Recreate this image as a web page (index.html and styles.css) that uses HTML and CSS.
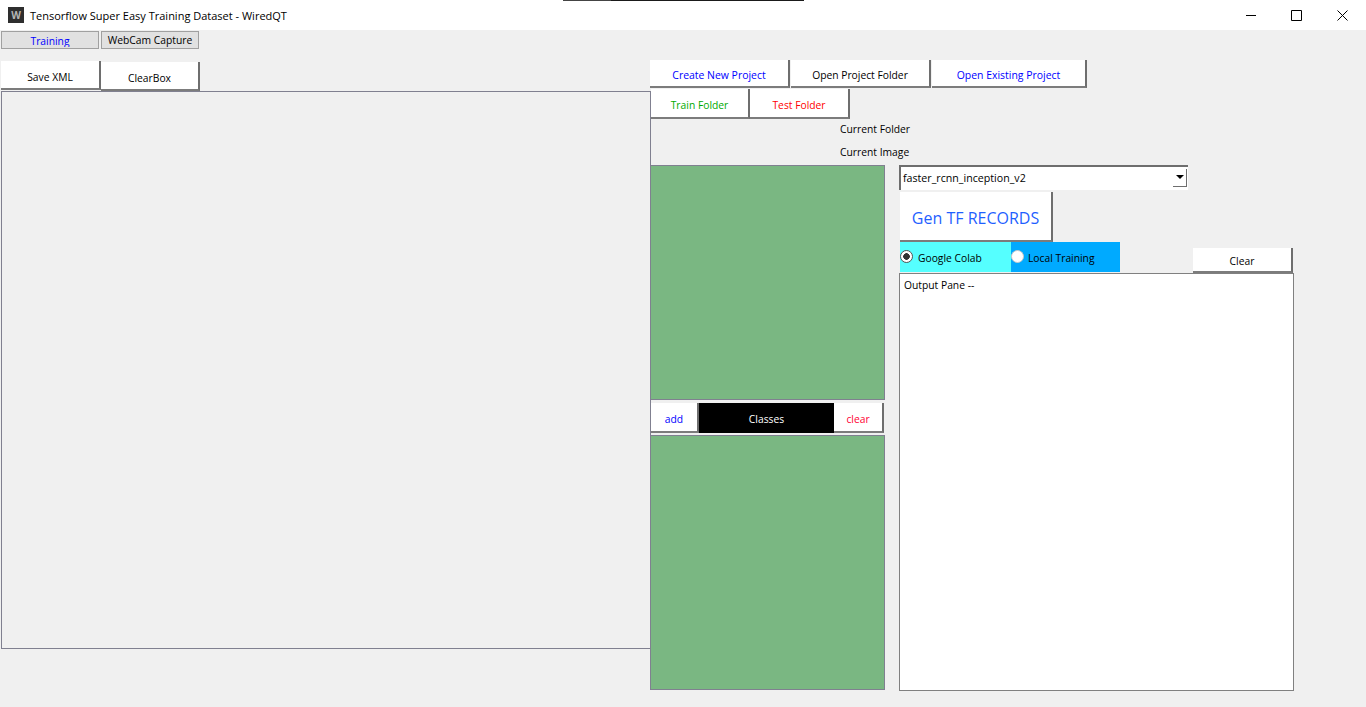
FILE: index.html
```html
<!DOCTYPE html>
<html lang="en">
<head>
  <meta charset="UTF-8" />
  <title>Tensorflow Super Easy Training Dataset - WiredQT</title>
  <link rel="stylesheet" href="styles.css">
</head>
<body>
  <!-- Window title bar -->
  <header class="titlebar">
    <div class="title-strip"></div>
    <span class="app-icon">W</span>
    <span class="app-title">Tensorflow Super Easy Training Dataset - WiredQT</span>
    <div class="window-controls">
      <svg class="win-min" width="10" height="10" viewBox="0 0 10 10"><path d="M0 5.5H10" stroke="#000" fill="none"/></svg>
      <svg class="win-max" width="11" height="11" viewBox="0 0 11 11"><path d="M.5.5H10.5V10.5H.5Z" stroke="#000" fill="none"/></svg>
      <svg class="win-close" width="11" height="11" viewBox="0 0 11 11"><path d="M.5.5L10.5 10.5M10.5.5L.5 10.5" stroke="#000" fill="none"/></svg>
    </div>
  </header>

  <!-- Tabs -->
  <nav class="tabs">
    <button class="tab tab-active"><span class="tab-label">Training</span></button>
    <button class="tab">WebCam Capture</button>
  </nav>

  <main class="workspace">
    <!-- Left side: image canvas -->
    <section class="canvas-side">
      <div class="canvas-tools">
        <button class="btn save-btn">Save XML</button>
        <button class="btn clearbox-btn">ClearBox</button>
      </div>
      <div class="canvas"></div>
    </section>

    <!-- Right side: project controls -->
    <section class="control-side">
      <div class="btn-row project-row">
        <button class="btn create-btn">Create New Project</button>
        <button class="btn folder-btn">Open Project Folder</button>
        <button class="btn existing-btn">Open Existing Project</button>
      </div>
      <div class="btn-row folder-row">
        <button class="btn train-btn">Train Folder</button>
        <button class="btn test-btn">Test Folder</button>
      </div>
      <div class="info-label">Current Folder</div>
      <div class="info-label">Current Image</div>

      <div class="panels">
        <div class="lists">
          <div class="list list-files"></div>
          <div class="class-bar">
            <button class="btn add-btn">add</button>
            <div class="class-title">Classes</div>
            <button class="btn clear-class-btn">clear</button>
          </div>
          <div class="list list-classes"></div>
        </div>

        <div class="training">
          <div class="combo">
            <span class="combo-text">faster_rcnn_inception_v2</span>
            <span class="combo-arrow"></span>
          </div>
          <button class="btn gen-btn">Gen TF RECORDS</button>
          <div class="mode-row">
            <label class="mode mode-colab"><input type="radio" name="mode" checked>Google Colab</label>
            <label class="mode mode-local"><input type="radio" name="mode">Local Training</label>
            <button class="btn output-clear">Clear</button>
          </div>
          <div class="output">Output Pane --</div>
        </div>
      </div>
    </section>
  </main>
</body>
</html>
```

FILE: styles.css
```css
/* Global resets */
* {
  box-sizing: border-box;
  margin: 0;
  padding: 0;
}
body {
  font-family: 'Open Sans', 'Noto Sans', sans-serif;
  font-size: 10.3px;
  color: #000;
  background: #f0f0f0;
  height: 707px;
  overflow: hidden;
}

/* Title bar */
.titlebar {
  position: relative;
  display: flex;
  align-items: center;
  height: 30px;
  padding-left: 8px;
  background: #fff;
}
.title-strip {
  position: absolute;
  top: 0;
  left: 563px;
  width: 241px;
  height: 1px;
  background: linear-gradient(to right, #444 48px, #1a1a1a 48px);
}
.app-icon {
  display: flex;
  align-items: center;
  justify-content: center;
  width: 16px;
  height: 16px;
  margin-right: 6px;
  background: #2e2e2e;
  color: #b5b5b5;
  font-size: 10px;
  font-weight: bold;
}
.app-title {
  font-size: 11px;
}
.window-controls {
  display: flex;
  align-items: center;
  margin-left: auto;
}
.win-min { margin-right: 35px; }
.win-max { margin-right: 35px; }
.win-close { margin-right: 18px; }

/* Tabs */
.tabs {
  display: flex;
  gap: 2px;
  padding: 1px 0 0 1px;
}
.tab {
  width: 98px;
  height: 18px;
  overflow: hidden;
  border: 1px solid #a0a0a0;
  background: #e1e1e1;
  font: inherit;
  line-height: 16px;
}
.tab-active {
  color: #0000ff;
}
.tab-label {
  display: block;
  height: 14px;
  overflow: hidden;
}

/* Main layout */
.workspace {
  display: flex;
  padding: 11px 0 0 1px;
}
.canvas-side {
  flex: none;
  width: 650px;
  padding-top: 1px;
}
.control-side {
  flex: none;
  width: 650px;
  margin-left: -1px;
}

/* Raised white buttons */
.btn {
  padding-top: 4px;
  border: none;
  border-right: 2px solid #6e6e6e;
  border-bottom: 2px solid #7c7c7c;
  background: #fff;
  font: inherit;
}

/* Canvas side */
.canvas-tools {
  display: flex;
  height: 30px;
}
.save-btn {
  width: 100px;
  height: 29px;
}
.clearbox-btn {
  width: 99px;
  height: 29px;
  margin-top: 1px;
}
.canvas {
  height: 558px;
  border: 1px solid #808090;
}

/* Project buttons */
.btn-row {
  display: flex;
}
.project-row {
  height: 29px;
}
.project-row .btn {
  height: 28px;
}
.create-btn {
  width: 140px;
  margin-right: 1px;
  color: #0000ff;
  font-size: 10.45px;
}
.folder-btn {
  width: 140px;
  margin-right: 1px;
}
.existing-btn {
  width: 155px;
  color: #0000ff;
  font-size: 10.45px;
}
.folder-row {
  height: 30px;
  padding-left: 1px;
}
.train-btn {
  width: 99px;
  color: #00aa00;
}
.test-btn {
  width: 100px;
  color: #ff0000;
}
.info-label {
  height: 23px;
  padding-left: 190px;
  line-height: 21px;
}

/* Lists and class bar */
.panels {
  display: flex;
}
.lists {
  flex: none;
  width: 235px;
  margin-right: 14px;
}
.list {
  border: 1px solid #808090;
  background: #7ab782;
}
.list-files {
  height: 235px;
}
.list-classes {
  height: 255px;
}
.class-bar {
  display: flex;
  width: 234px;
  height: 30px;
  margin: 3px 0 2px;
  padding-left: 1px;
}
.add-btn {
  width: 48px;
  color: #0000ff;
}
.class-title {
  width: 135px;
  background: #000;
  color: #fff;
  text-align: center;
  line-height: 32px;
}
.clear-class-btn {
  width: 50px;
  color: #ff0033;
}

/* Training controls */
.training {
  flex: none;
  width: 395px;
}
.combo {
  display: flex;
  align-items: center;
  justify-content: space-between;
  width: 289px;
  height: 25px;
  padding: 0 1px 2px 2px;
  border-top: 2px solid #6e6e6e;
  border-left: 2px solid #6e6e6e;
  background: #fff;
}
.combo-text {
  font-size: 10.65px;
}
.combo-arrow {
  display: flex;
  align-items: center;
  justify-content: center;
  width: 14px;
  height: 18px;
  border-right: 1px solid #6e6e6e;
  border-bottom: 1px solid #6e6e6e;
}
.combo-arrow::after {
  content: "";
  border-top: 4px solid #000;
  border-left: 4px solid transparent;
  border-right: 4px solid transparent;
}
.gen-btn {
  display: block;
  width: 153px;
  height: 50px;
  margin: 2px 0 0 1px;
  color: #1f5fff;
  font-size: 16px;
}
.mode-row {
  display: flex;
  height: 31px;
  padding: 0 1px;
}
.mode {
  display: flex;
  align-items: center;
  height: 30px;
  padding-top: 1px;
}
.mode input {
  appearance: none;
  width: 13px;
  height: 13px;
  margin-top: -3px;
  border: 1px solid #555;
  border-radius: 50%;
  background: #fff;
}
.mode input:checked {
  background: radial-gradient(circle, #333 3px, #fff 3.6px);
}
.mode-colab {
  width: 111px;
  background: #55ffff;
}
.mode-colab input {
  margin-right: 5px;
}
.mode-local {
  width: 109px;
  background: #00aaff;
}
.mode-local input {
  margin-right: 4px;
  border-color: #c8c8c8;
}
.output-clear {
  width: 100px;
  height: 25px;
  margin: 6px 0 0 auto;
  padding-top: 2px;
}
.output {
  height: 418px;
  padding: 4px;
  border: 1px solid #808080;
  background: #fff;
}
```
